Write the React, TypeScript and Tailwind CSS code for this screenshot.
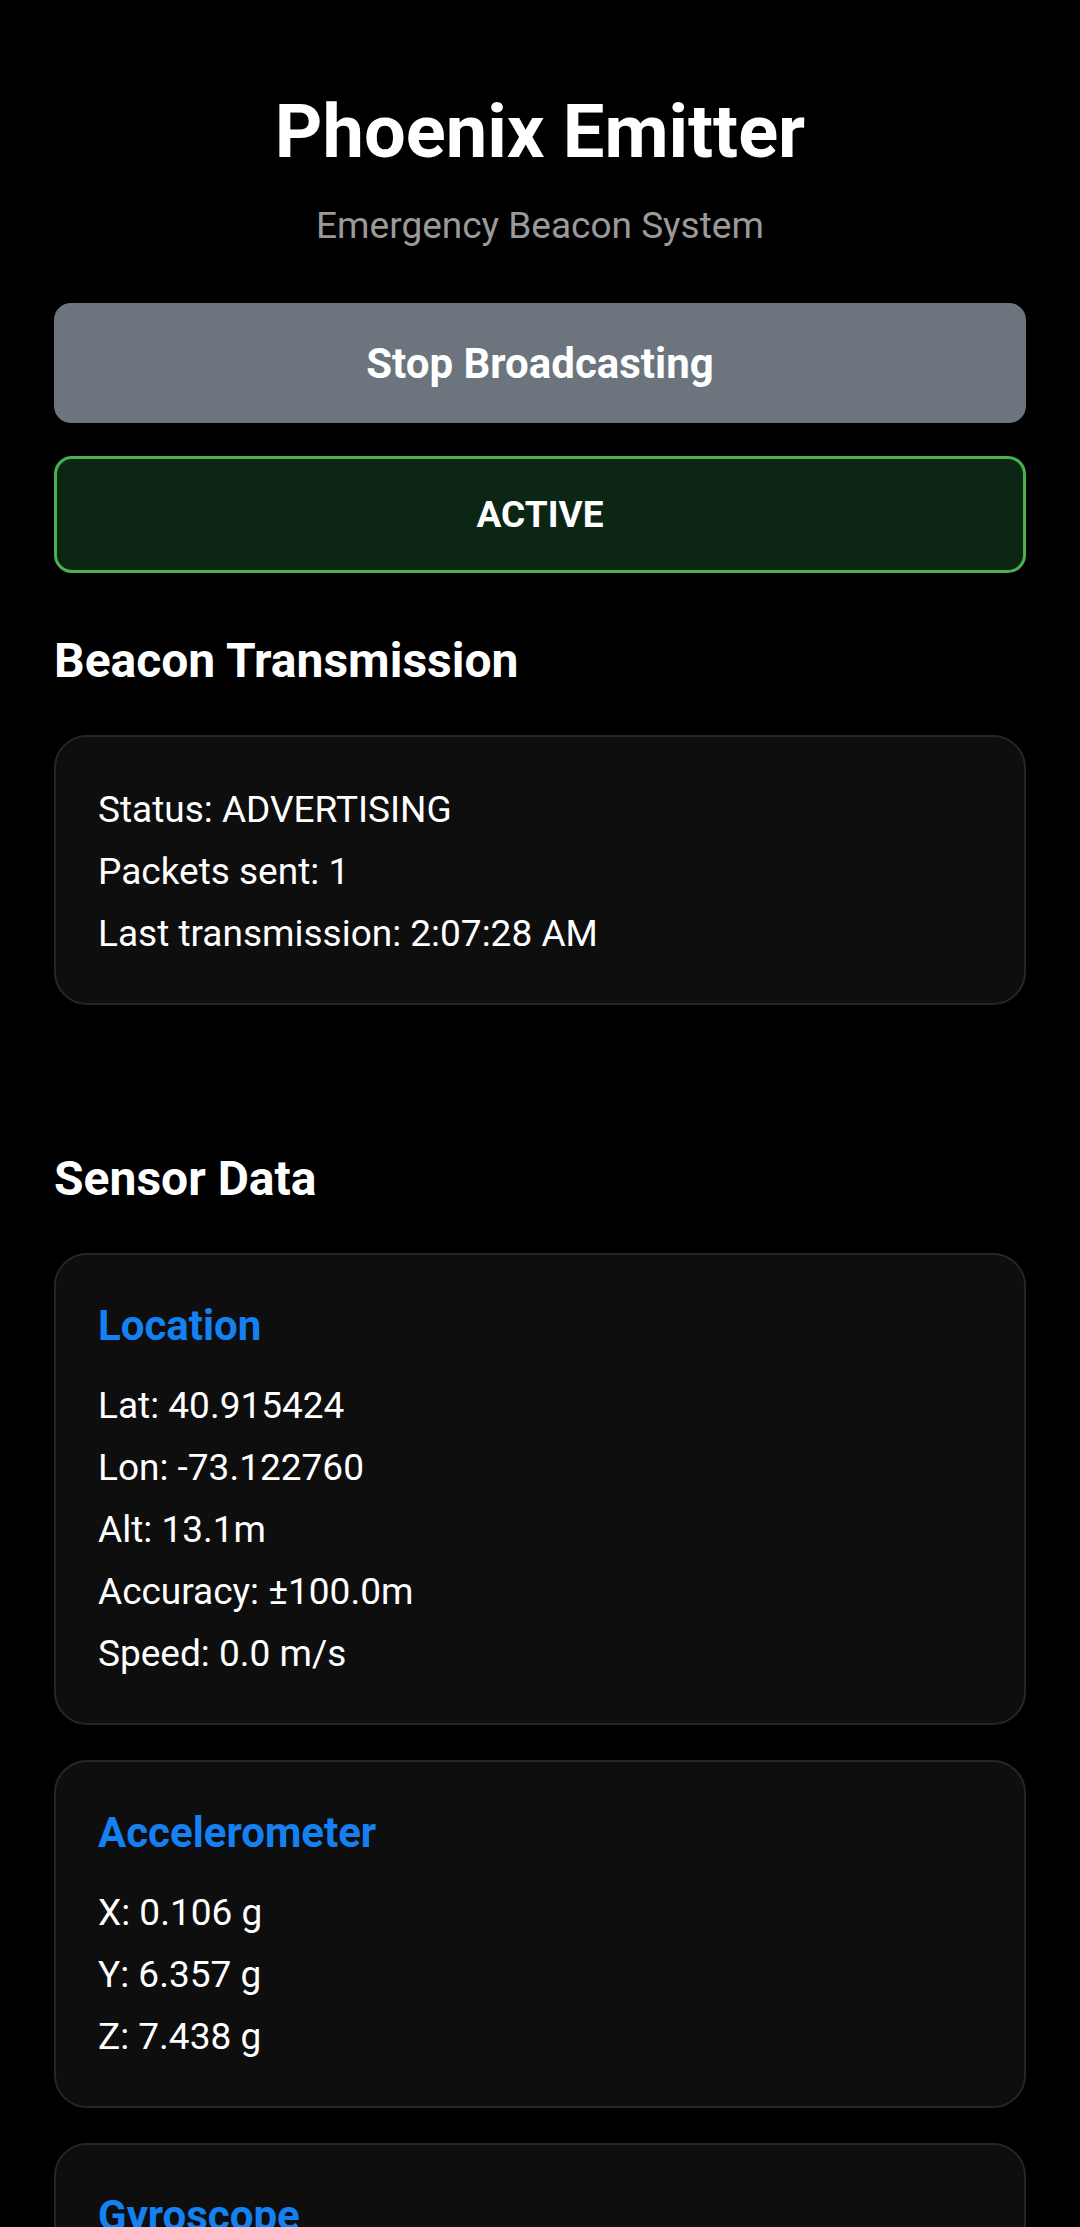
import React from "react";

function Card({ title, lines }: { title?: string; lines: string[] }) {
  return (
    <div className="rounded-[33px] border-2 border-[#262626] bg-[#0e0e0e] px-[42px] pt-[42px] pb-[38px]">
      {title && (
        <h3 className="mt-[4px] mb-[24px] text-[42px] leading-[50px] font-bold text-[#1580f2]">{title}</h3>
      )}
      {lines.map((l) => (
        <p key={l} className="text-[37px] leading-[62px] text-white">
          {l}
        </p>
      ))}
    </div>
  );
}

export default function App() {
  return (
    <div className="h-screen overflow-hidden bg-black font-['Roboto',sans-serif] text-white">
      <div className="px-[54px] pt-[87px] pb-[60px]">
        <h1 className="text-center text-[74px] leading-[90px] font-bold">Phoenix Emitter</h1>
        <p className="mt-[28px] text-center text-[37px] leading-[42px] text-[#9a9a9a]">Emergency Beacon System</p>
        <button className="mt-[56px] flex h-[120px] w-full items-center justify-center rounded-[17px] bg-[#6c757d] text-[42px] font-bold text-white">
          Stop Broadcasting
        </button>
        <div className="mt-[33px] flex h-[117px] items-center justify-center rounded-[18px] border-[3px] border-[#4caf50] bg-[#0c2614] text-[37px] font-bold">
          ACTIVE
        </div>

        <h2 className="mt-[60px] text-[48px] leading-[56px] font-bold">Beacon Transmission</h2>
        <div className="mt-[46px]">
          <Card lines={["Status: ADVERTISING", "Packets sent: 1", "Last transmission: 2:07:28 AM"]} />
        </div>

        <h2 className="mt-[146px] text-[48px] leading-[56px] font-bold">Sensor Data</h2>
        <div className="mt-[46px] flex flex-col gap-[35px]">
          <Card
            title="Location"
            lines={["Lat: 40.915424", "Lon: -73.122760", "Alt: 13.1m", "Accuracy: ±100.0m", "Speed: 0.0 m/s"]}
          />
          <Card title="Accelerometer" lines={["X: 0.106 g", "Y: 6.357 g", "Z: 7.438 g"]} />
          <Card title="Gyroscope" lines={["X: 0.002 rad/s", "Y: -0.011 rad/s", "Z: 0.004 rad/s"]} />
        </div>
      </div>
    </div>
  );
}
